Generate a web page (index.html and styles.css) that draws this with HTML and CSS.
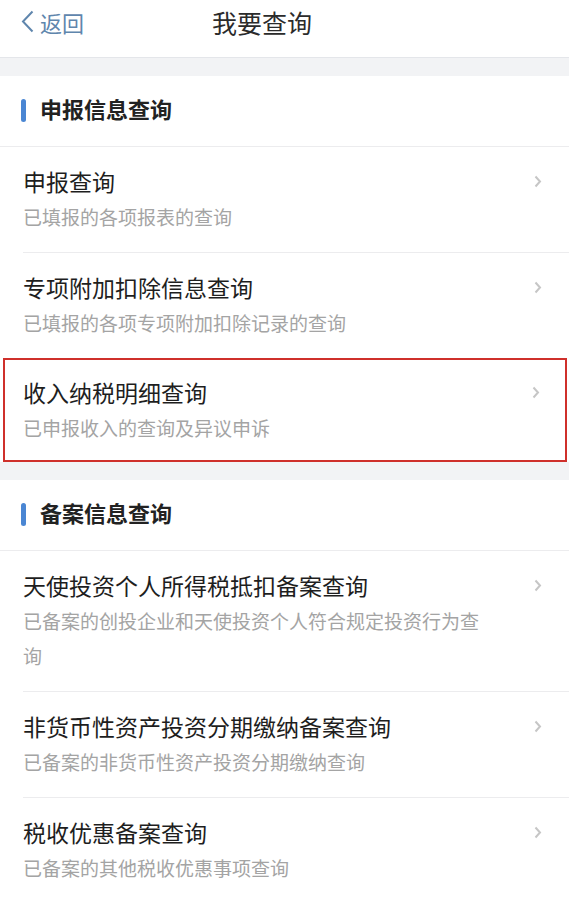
FILE: index.html
```html
<!DOCTYPE html>
<html lang="zh-CN">
<head>
    <meta charset="UTF-8">
    <meta name="viewport" content="width=device-width, initial-scale=1.0">
    <title>我要查询</title>
    <link rel="stylesheet" href="styles.css">
</head>
<body>
    <header class="navbar">
        <a class="back" href="#">
            <svg class="back-icon" width="13" height="23" viewBox="0 0 13 23"><path d="M11.5 1.5 L2 11.5 L11.5 21.5" fill="none" stroke="#5f86ad" stroke-width="2"/></svg>
            <span>返回</span>
        </a>
        <h1 class="nav-title">我要查询</h1>
    </header>

    <div class="band"></div>

    <section class="group">
        <h2 class="group-head"><span class="bar"></span>申报信息查询</h2>
        <ul class="list">
            <li class="item">
                <div class="text">
                    <div class="title">申报查询</div>
                    <div class="sub">已填报的各项报表的查询</div>
                </div>
                <svg class="arrow" width="8" height="13" viewBox="0 0 8 13"><path d="M1.5 1.5 L6 6.5 L1.5 11.5" fill="none" stroke="#c6c6c6" stroke-width="2"/></svg>
            </li>
            <li class="item">
                <div class="text">
                    <div class="title">专项附加扣除信息查询</div>
                    <div class="sub">已填报的各项专项附加扣除记录的查询</div>
                </div>
                <svg class="arrow" width="8" height="13" viewBox="0 0 8 13"><path d="M1.5 1.5 L6 6.5 L1.5 11.5" fill="none" stroke="#c6c6c6" stroke-width="2"/></svg>
            </li>
            <li class="item marked">
                <div class="text">
                    <div class="title">收入纳税明细查询</div>
                    <div class="sub">已申报收入的查询及异议申诉</div>
                </div>
                <svg class="arrow" width="8" height="13" viewBox="0 0 8 13"><path d="M1.5 1.5 L6 6.5 L1.5 11.5" fill="none" stroke="#c6c6c6" stroke-width="2"/></svg>
            </li>
        </ul>
    </section>

    <div class="band"></div>

    <section class="group">
        <h2 class="group-head"><span class="bar"></span>备案信息查询</h2>
        <ul class="list">
            <li class="item">
                <div class="text">
                    <div class="title">天使投资个人所得税抵扣备案查询</div>
                    <div class="sub">已备案的创投企业和天使投资个人符合规定投资行为查询</div>
                </div>
                <svg class="arrow" width="8" height="13" viewBox="0 0 8 13"><path d="M1.5 1.5 L6 6.5 L1.5 11.5" fill="none" stroke="#c6c6c6" stroke-width="2"/></svg>
            </li>
            <li class="item">
                <div class="text">
                    <div class="title">非货币性资产投资分期缴纳备案查询</div>
                    <div class="sub">已备案的非货币性资产投资分期缴纳查询</div>
                </div>
                <svg class="arrow" width="8" height="13" viewBox="0 0 8 13"><path d="M1.5 1.5 L6 6.5 L1.5 11.5" fill="none" stroke="#c6c6c6" stroke-width="2"/></svg>
            </li>
            <li class="item">
                <div class="text">
                    <div class="title">税收优惠备案查询</div>
                    <div class="sub">已备案的其他税收优惠事项查询</div>
                </div>
                <svg class="arrow" width="8" height="13" viewBox="0 0 8 13"><path d="M1.5 1.5 L6 6.5 L1.5 11.5" fill="none" stroke="#c6c6c6" stroke-width="2"/></svg>
            </li>
        </ul>
    </section>
</body>
</html>
```

FILE: styles.css
```css
body {
    margin: 0;
    background: #fff;
    font-family: "Noto Sans CJK SC", "Noto Sans", sans-serif;
    color: #222;
}
.navbar {
    box-sizing: content-box;
    height: 43px;
    display: flex;
    align-items: center;
    padding: 0 0 14px 21px;
    border-bottom: 1px solid #e4e6ea;
}
.back {
    display: flex;
    align-items: center;
    text-decoration: none;
    color: #5f86ad;
    font-size: 22px;
}
.back-icon {
    margin-right: 6px;
}
.nav-title {
    margin: 0 0 0 128px;
    font-size: 25px;
    font-weight: normal;
    color: #2b2b2b;
}
.band {
    height: 18px;
    background: #f2f3f5;
}
.group {
    background: #fff;
}
.group-head {
    margin: 0;
    box-sizing: border-box;
    height: 71px;
    display: flex;
    align-items: center;
    padding: 0 0 6px 21px;
    font-size: 22px;
    font-weight: bold;
    color: #222;
    border-bottom: 1px solid #ececee;
}
.bar {
    width: 5px;
    height: 23px;
    border-radius: 3px;
    background: #4a86d3;
    margin: 5px 14px 0 0;
}
.list {
    list-style: none;
    margin: 0;
    padding: 0;
}
.item {
    display: flex;
    align-items: flex-start;
    margin-left: 23px;
    padding: 16px 27px 18px 0;
}
.item + .item {
    border-top: 1px solid #ececee;
}
.text {
    flex: 1;
    margin-right: 45px;
}
.title {
    font-size: 23px;
    line-height: 36px;
    color: #1e1e1e;
}
.sub {
    font-size: 19px;
    line-height: 35px;
    color: #a4a4a4;
}
.arrow {
    margin-top: 12px;
}
.item.marked {
    border: 2px solid #cf302b;
    margin: 0 2px 0 3px;
    padding: 14px 25px 15px 18px;
}
```
